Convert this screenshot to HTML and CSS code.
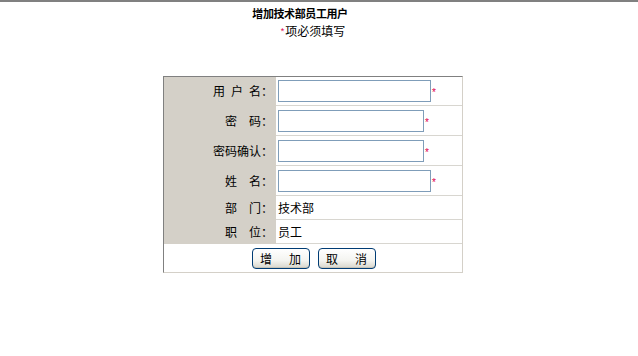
FILE: index.html
```html
<!DOCTYPE html>
<html lang="zh-CN">
<head>
<meta charset="utf-8">
<title>增加技术部员工用户</title>
<link rel="stylesheet" href="styles.css">
</head>
<body>
<div class="topbar"></div>
<h1 class="title">增加技术部员工用户</h1>
<div class="page">
  <p class="note"><span class="note-star">*</span>项必须填写</p>
  <table class="form">
    <tr class="row-input row-first">
      <th>用&ensp;户&ensp;名：</th>
      <td><div class="field"><input class="txt txt-long" type="text"><span class="req">*</span></div></td>
    </tr>
    <tr class="row-input">
      <th>密　码：</th>
      <td><div class="field"><input class="txt txt-short" type="password"><span class="req">*</span></div></td>
    </tr>
    <tr class="row-input">
      <th>密码确认：</th>
      <td><div class="field"><input class="txt txt-short" type="password"><span class="req">*</span></div></td>
    </tr>
    <tr class="row-input">
      <th>姓　名：</th>
      <td><div class="field"><input class="txt txt-long" type="text"><span class="req">*</span></div></td>
    </tr>
    <tr class="row-text">
      <th>部　门：</th>
      <td>技术部</td>
    </tr>
    <tr class="row-text">
      <th>职　位：</th>
      <td>员工</td>
    </tr>
    <tr class="row-btn">
      <td colspan="2" class="btn-cell">
        <div class="btns">
          <button class="btn" type="button">增<span class="gap"></span>加</button>
          <button class="btn" type="button">取<span class="gap"></span>消</button>
        </div>
      </td>
    </tr>
  </table>
</div>
</body>
</html>
```

FILE: styles.css
```css
html, body {
  margin: 0;
  padding: 0;
  background: #ffffff;
}

body {
  font-family: "Noto Sans CJK SC", "Liberation Sans", sans-serif;
  font-size: 12px;
  color: #000000;
}

.topbar {
  height: 2px;
  background: #808080;
}

.title {
  width: 600px;
  margin: 0;
  padding-top: 3px;
  font-size: 11px;
  letter-spacing: -0.4px;
  line-height: 16px;
  font-weight: bold;
  text-align: center;
}

.page {
  width: 626px;
}

.note {
  margin: 0;
  padding-top: 2px;
  line-height: 16px;
  text-align: center;
}

.note-star {
  color: #e0004a;
  font-family: "Liberation Sans", sans-serif;
  font-size: 9px;
  vertical-align: 2px;
  margin-right: 1px;
}

.form {
  margin: 37px auto 0;
  width: 300px;
  border-collapse: separate;
  border-spacing: 0;
  border-top: 1px solid #808080;
  border-left: 1px solid #808080;
  border-right: 1px solid #d4d0c8;
  border-bottom: 1px solid #d4d0c8;
}

.form th,
.form td {
  padding: 0;
  font-weight: normal;
  line-height: 16px;
  vertical-align: middle;
  border-bottom: 1px solid #d8d6d0;
}

.form th {
  width: 112px;
  box-sizing: border-box;
  padding-right: 3px;
  text-align: right;
  background: #d4d0c8;
  border-bottom-color: #d4d0c8;
  white-space: nowrap;
}

.form td {
  padding-left: 2px;
}

.form .btn-cell {
  padding: 0;
  border-bottom: none;
}

.row-input {
  height: 30px;
}

.row-first {
  height: 29px;
}

.row-text {
  height: 24px;
}

.row-btn {
  height: 28px;
}

.field {
  display: flex;
  align-items: center;
}

.txt {
  box-sizing: border-box;
  height: 22px;
  margin: 0;
  padding: 1px 2px;
  border: 1px solid #7f9db9;
  background: #ffffff;
  font: inherit;
}

.txt-long {
  width: 153px;
}

.txt-short {
  width: 146px;
}

.req {
  color: #e0004a;
  font-family: "Liberation Sans", sans-serif;
  font-size: 10px;
  line-height: 10px;
  margin-left: 1px;
  padding-top: 4px;
}

.btns {
  display: flex;
  justify-content: center;
  gap: 8px;
  padding-left: 1px;
}

.btn {
  box-sizing: border-box;
  width: 58px;
  height: 21px;
  padding: 0;
  border: 1px solid #003c74;
  border-radius: 4px;
  background: linear-gradient(#ffffff 0%, #f4f4f0 60%, #d8d6cc 100%);
  box-shadow: inset 0 -1px 0 #c8c4b8;
  font-family: "Noto Sans CJK SC", sans-serif;
  font-size: 12px;
  line-height: 17px;
  color: #000000;
  display: flex;
  align-items: center;
  justify-content: center;
}

.gap {
  display: inline-block;
  width: 17px;
}
```
